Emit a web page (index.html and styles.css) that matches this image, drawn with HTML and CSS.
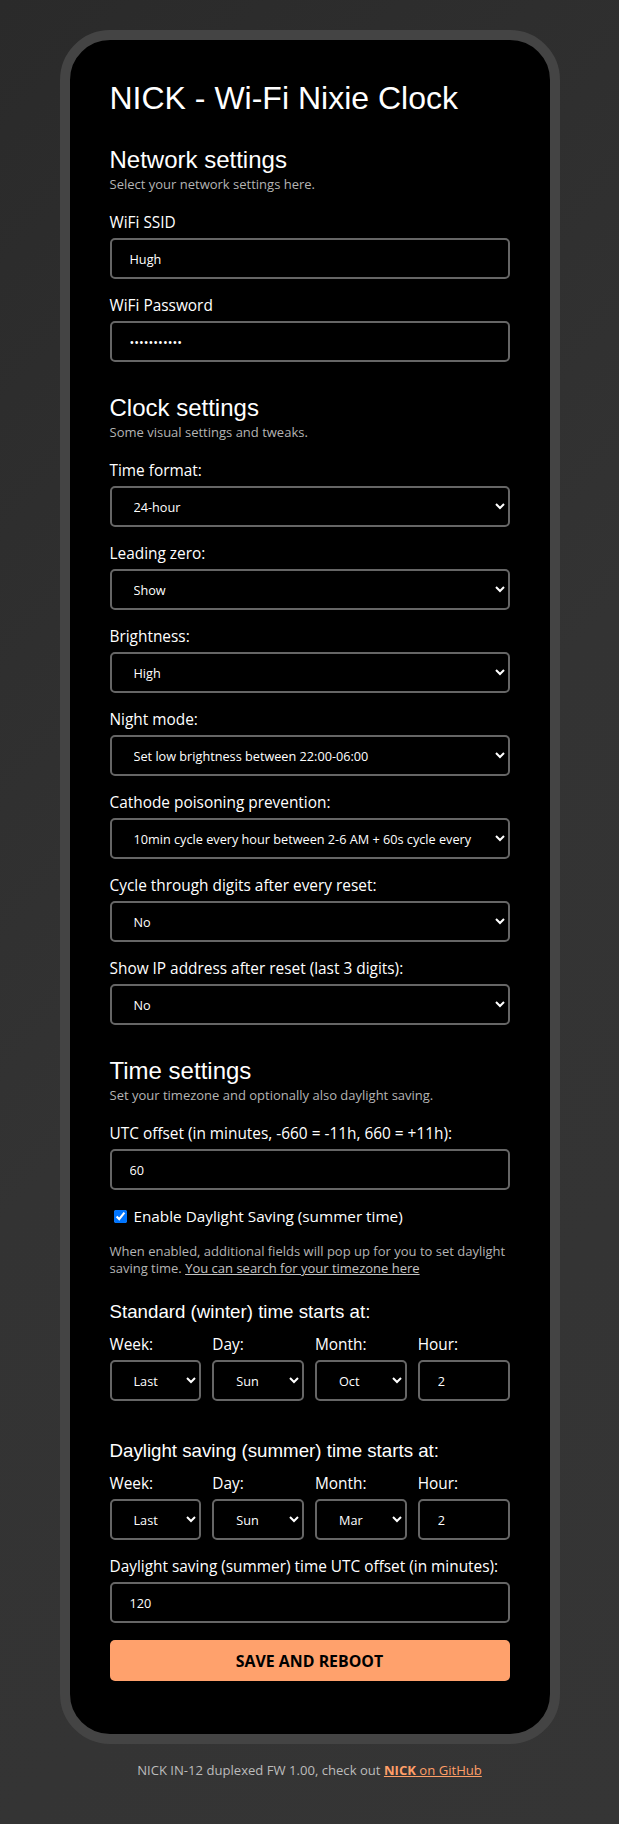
FILE: index.html
```html
<!DOCTYPE html>
<html lang="en">
<head>
<meta charset="utf-8">
<title>NICK - Wi-Fi Nixie Clock</title>
<link rel="stylesheet" href="styles.css">
</head>
<body>
<main class="card">
  <h1 class="title">NICK - Wi-Fi Nixie Clock</h1>

  <section class="section">
    <h2 class="section-title">Network settings</h2>
    <p class="section-sub">Select your network settings here.</p>
    <div class="field">
      <label class="label" for="ssid">WiFi SSID</label>
      <input class="control" id="ssid" type="text" value="Hugh">
    </div>
    <div class="field">
      <label class="label" for="pass">WiFi Password</label>
      <input class="control" id="pass" type="password" value="hughpasswrd">
    </div>
  </section>

  <section class="section">
    <h2 class="section-title">Clock settings</h2>
    <p class="section-sub">Some visual settings and tweaks.</p>
    <div class="field">
      <label class="label" for="tf">Time format:</label>
      <select class="control" id="tf"><option>24-hour</option><option>12-hour</option></select>
    </div>
    <div class="field">
      <label class="label" for="lz">Leading zero:</label>
      <select class="control" id="lz"><option>Show</option><option>Hide</option></select>
    </div>
    <div class="field">
      <label class="label" for="br">Brightness:</label>
      <select class="control" id="br"><option>High</option><option>Low</option></select>
    </div>
    <div class="field">
      <label class="label" for="nm">Night mode:</label>
      <select class="control" id="nm"><option>Set low brightness between 22:00-06:00</option></select>
    </div>
    <div class="field">
      <label class="label" for="cp">Cathode poisoning prevention:</label>
      <select class="control" id="cp"><option>10min cycle every hour between 2-6 AM + 60s cycle every 15 minutes</option></select>
    </div>
    <div class="field">
      <label class="label" for="cy">Cycle through digits after every reset:</label>
      <select class="control" id="cy"><option>No</option><option>Yes</option></select>
    </div>
    <div class="field">
      <label class="label" for="ip">Show IP address after reset (last 3 digits):</label>
      <select class="control" id="ip"><option>No</option><option>Yes</option></select>
    </div>
  </section>

  <section class="section">
    <h2 class="section-title">Time settings</h2>
    <p class="section-sub">Set your timezone and optionally also daylight saving.</p>
    <div class="field">
      <label class="label" for="utc">UTC offset (in minutes, -660 = -11h, 660 = +11h):</label>
      <input class="control" id="utc" type="number" value="60">
    </div>
    <label class="check-row"><input type="checkbox" checked> Enable Daylight Saving (summer time)</label>
    <p class="note">When enabled, additional fields will pop up for you to set daylight saving time. <a class="note-link" href="#">You can search for your timezone here</a></p>

    <h3 class="sub-title">Standard (winter) time starts at:</h3>
    <div class="grid4">
      <div class="cell"><label class="label">Week:</label><select class="control"><option>Last</option></select></div>
      <div class="cell"><label class="label">Day:</label><select class="control"><option>Sun</option></select></div>
      <div class="cell"><label class="label">Month:</label><select class="control"><option>Oct</option></select></div>
      <div class="cell"><label class="label">Hour:</label><input class="control" type="number" value="2"></div>
    </div>

    <h3 class="sub-title second">Daylight saving (summer) time starts at:</h3>
    <div class="grid4">
      <div class="cell"><label class="label">Week:</label><select class="control"><option>Last</option></select></div>
      <div class="cell"><label class="label">Day:</label><select class="control"><option>Sun</option></select></div>
      <div class="cell"><label class="label">Month:</label><select class="control"><option>Mar</option></select></div>
      <div class="cell"><label class="label">Hour:</label><input class="control" type="number" value="2"></div>
    </div>

    <div class="field field-last">
      <label class="label" for="dst">Daylight saving (summer) time UTC offset (in minutes):</label>
      <input class="control" id="dst" type="number" value="120">
    </div>
  </section>

  <button class="save" type="button">SAVE AND REBOOT</button>
</main>
<footer class="footer">NICK IN-12 duplexed FW 1.00, check out <a class="footer-link" href="#"><b>NICK</b> on GitHub</a></footer>
</body>
</html>
```

FILE: styles.css
```css
html, body {
  margin: 0;
  padding: 0;
}
body {
  min-height: 1824px;
  background: linear-gradient(135deg, #2a2a2a 0%, #333333 50%, #353535 100%);
  font-family: "Open Sans", "Noto Sans", sans-serif;
  color: #ffffff;
  padding-top: 30px;
  box-sizing: border-box;
}
.card {
  display: block;
  width: 500px;
  box-sizing: border-box;
  margin: 0 auto;
  background: #000;
  border: 10px solid #444;
  border-radius: 50px;
  padding: 40px 40px 53px;
}
.title {
  font-family: "Liberation Sans", Arial, sans-serif;
  font-size: 32px;
  font-weight: normal;
  line-height: 37px;
  margin: 0 0 29px;
}
.section {
  display: flow-root;
}
.section + .section {
  margin-top: 15px;
}
.section-title {
  font-family: "Liberation Sans", Arial, sans-serif;
  font-size: 24px;
  font-weight: normal;
  line-height: 27px;
  margin: 0;
}
.section-sub {
  font-size: 13px;
  line-height: 16px;
  color: #b4b4b4;
  margin: 3px 0 21px;
}
.field {
  margin-bottom: 17px;
}
.field-last {
  margin-bottom: 17px;
}
.label {
  display: block;
  font-size: 15.4px;
  line-height: 19px;
  margin-bottom: 6px;
  color: #fff;
  white-space: nowrap;
}
.control {
  display: block;
  width: 100%;
  height: 41px;
  box-sizing: border-box;
  background: #000;
  color: #fff;
  border: 2px solid #666;
  border-radius: 5px;
  padding: 0 18px;
  font-family: "Open Sans", "Noto Sans", sans-serif;
  font-size: 12.7px;
  outline: none;
  margin: 0;
}
input[type=number].control::-webkit-inner-spin-button,
input[type=number].control::-webkit-outer-spin-button {
  -webkit-appearance: none;
  margin: 0;
}
input[type=number].control {
  -moz-appearance: textfield;
}
.check-row {
  display: flex;
  align-items: center;
  font-size: 15.3px;
  line-height: 19px;
  white-space: pre;
}
.check-row input {
  width: 13px;
  height: 13px;
  margin: 0 3px 0 4px;
  accent-color: #0075ff;
}
.note {
  font-size: 13px;
  line-height: 17.3px;
  color: #b4b4b4;
  margin: 17px 0 0;
}
.note-link {
  color: #c4c4c4;
  text-decoration: underline;
}
.sub-title {
  font-family: "Liberation Sans", Arial, sans-serif;
  font-size: 18.72px;
  font-weight: normal;
  line-height: 22px;
  margin: 23px 0 12.5px;
}
.sub-title.second {
  margin-top: 38.5px;
}
.grid4 {
  display: grid;
  grid-template-columns: repeat(4, 1fr);
  column-gap: 11px;
  margin-bottom: 17px;
}
.cell .label {
  margin-bottom: 6px;
}
.save {
  display: block;
  width: 100%;
  height: 41px;
  border: none;
  border-radius: 5px;
  background: #ffa16c;
  color: #000;
  font-family: "Open Sans", "Noto Sans", sans-serif;
  font-weight: bold;
  font-size: 15.9px;
  cursor: pointer;
}
.footer {
  text-align: center;
  font-size: 13.1px;
  line-height: 17px;
  color: #bcbcbc;
  margin-top: 18px;
}
.footer-link {
  color: #ff9f68;
  text-decoration: underline;
}
```
